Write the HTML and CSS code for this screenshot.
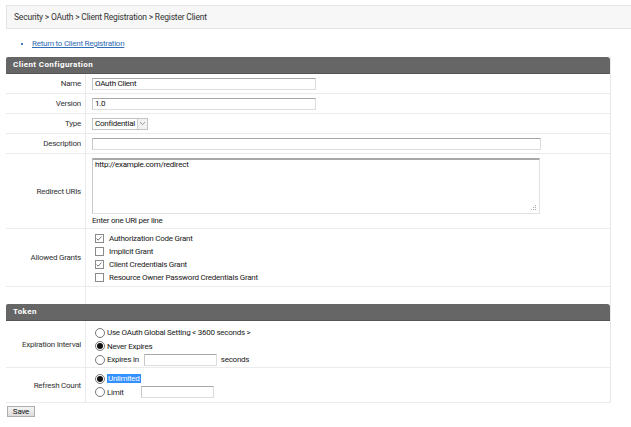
FILE: index.html
```html
<!DOCTYPE html>
<html>
<head>
<meta charset="utf-8">
<link rel="stylesheet" href="styles.css">
</head>
<body>
<div class="crumbs">Security &gt; OAuth &gt; Client Registration &gt; Register Client</div>
<ul class="links"><li><a href="#">Return to Client Registration</a></li></ul>

<div class="panel">
  <div class="panel-head">Client Configuration</div>
  <div class="row"><div class="lbl">Name</div><div class="val"><span class="inp w-mid">OAuth Client</span></div></div>
  <div class="row"><div class="lbl">Version</div><div class="val"><span class="inp w-mid">1.0</span></div></div>
  <div class="row"><div class="lbl">Type</div><div class="val"><span class="sel">Confidential<span class="sel-btn"><svg width="7" height="5" viewBox="0 0 7 5"><path d="M1 1.2 L3.5 3.6 L6 1.2" fill="none" stroke="#888" stroke-width="0.9"/></svg></span></span></div></div>
  <div class="row"><div class="lbl">Description</div><div class="val"><span class="inp w-wide"></span></div></div>
  <div class="row tall"><div class="lbl">Redirect URIs</div><div class="val col"><div class="ta">http://example.com/redirect<svg class="grip" width="6" height="6" viewBox="0 0 6 6"><rect x="4" y="0" width="1" height="1" fill="#aaa"/><rect x="2" y="2" width="1" height="1" fill="#aaa"/><rect x="4" y="2" width="1" height="1" fill="#aaa"/><rect x="0" y="4" width="1" height="1" fill="#aaa"/><rect x="2" y="4" width="1" height="1" fill="#aaa"/><rect x="4" y="4" width="1" height="1" fill="#aaa"/></svg></div><div class="hint">Enter one URI per line</div></div></div>
  <div class="row grants"><div class="lbl">Allowed Grants</div><div class="val col">
    <label class="opt"><span class="cb"><svg width="9" height="9" viewBox="0 0 9 9"><path d="M1.8 4.6 L3.6 6.4 L7.3 2.2" fill="none" stroke="#555" stroke-width="0.9"/></svg></span>Authorization Code Grant</label>
    <label class="opt"><span class="cb"></span>Implicit Grant</label>
    <label class="opt"><span class="cb"><svg width="9" height="9" viewBox="0 0 9 9"><path d="M1.8 4.6 L3.6 6.4 L7.3 2.2" fill="none" stroke="#555" stroke-width="0.9"/></svg></span>Client Credentials Grant</label>
    <label class="opt"><span class="cb"></span>Resource Owner Password Credentials Grant</label>
  </div></div>
  <div class="row empty"><div class="lbl"></div><div class="val"></div></div>
</div>

<div class="panel token">
  <div class="panel-head">Token</div>
  <div class="row exp"><div class="lbl">Expiration Interval</div><div class="val col">
    <label class="ropt"><span class="rd"></span>Use OAuth Global Setting &lt; 3600 seconds &gt;</label>
    <label class="ropt"><span class="rd on"></span>Never Expires</label>
    <label class="ropt"><span class="rd"></span>Expires in<span class="inp w-sm exp-in"></span>seconds</label>
  </div></div>
  <div class="row ref"><div class="lbl">Refresh Count</div><div class="val col">
    <label class="ropt"><span class="rd on"></span><span class="hl">Unlimited</span></label>
    <label class="ropt"><span class="rd"></span>Limit<span class="inp w-sm lim-in"></span></label>
  </div></div>
</div>
<button class="save">Save</button>
</body>
</html>
```
FILE: styles.css
```css
* { box-sizing: border-box; }
body {
  margin: 0;
  background: #fff;
  font-family: Roboto, "Liberation Sans", Arial, sans-serif;
  font-size: 8px;
  letter-spacing: -0.25px;
  color: #222;
}
.crumbs {
  margin: 5px 0 0 6px;
  height: 24px;
  background: #f7f7f7;
  border: 1px solid #e4e4e4;
  border-right: none;
  padding-left: 7px;
  line-height: 22px;
  font-size: 8.5px;
  letter-spacing: -0.2px;
  color: #333;
}
.links {
  margin: 8px 0 0 0;
  padding: 0 0 0 32px;
  height: 20px;
  line-height: 13px;
  list-style: square;
  color: #3b7dc4;
}
.links li::marker { font-size: 6px; }
.links a { color: #2f6db5; font-size: 8px; }
.panel {
  width: 605px;
  margin-left: 6px;
  border-right: 1px solid #e8e8e8;
}
.panel-head {
  height: 17px;
  background: #666;
  color: #fff;
  font-weight: bold;
  letter-spacing: 0.4px;
  padding-left: 7px;
  line-height: 16px;
  border-radius: 2px 3px 0 0;
  border-bottom: 1px solid #555;
  font-size: 8px;
}
.row {
  display: grid;
  grid-template-columns: 80px 1fr;
  height: 20px;
  border-bottom: 1px solid #ebebeb;
}
.lbl {
  border-right: 1px solid #ebebeb;
  text-align: right;
  padding-right: 4px;
  display: flex;
  align-items: center;
  justify-content: flex-end;
  color: #333;
}
.val {
  display: flex;
  align-items: center;
  padding-left: 6px;
}
.val.col {
  flex-direction: column;
  align-items: flex-start;
  justify-content: flex-start;
}
.inp {
  display: inline-block;
  height: 12px;
  border: 1px solid #ddd;
  border-top-color: #a8a8a8;
  border-left-color: #c8c8c8;
  background: #fff;
  padding-left: 2px;
  line-height: 10px;
  font-size: 8px;
  color: #111;
}
.w-mid { width: 224px; }
.w-wide { width: 449px; }
.sel {
  display: inline-flex;
  align-items: center;
  height: 12px;
  border: 1px solid #c4c4c4;
  padding-left: 2px;
  font-size: 8px;
  color: #111;
  background: #fff;
}
.sel-btn {
  display: inline-flex;
  align-items: center;
  justify-content: center;
  width: 10px;
  height: 10px;
  margin: 0 0 0 2px;
  border-left: 1px solid #ccc;
  background: #f2f2f2;
}
.row.tall { height: 75px; }
.ta {
  position: relative;
  margin-top: 4px;
  width: 448px;
  height: 56px;
  border: 1px solid #e2e2e2;
  border-top: 2px solid #a8a8a8;
  border-left-color: #c8c8c8;
  padding: 0 2px;
  font-size: 8px;
  line-height: 10px;
  color: #111;
}
.grip { position: absolute; right: 2px; bottom: 2px; }
.hint { margin-top: 2px; font-size: 8px; color: #222; }
.row.grants { height: 58px; }
.grants .val { padding-top: 3px; padding-left: 9px; }
.opt {
  display: flex;
  align-items: center;
  height: 13px;
  color: #222;
}
.cb {
  display: inline-flex;
  width: 9px;
  height: 9px;
  border: 1px solid #8a8a8a;
  margin-right: 5px;
  background: #fff;
}
.cb svg { margin: -1px 0 0 -1px; }
.row.empty { height: 17px; border-bottom: none; }
.panel.token { margin-top: 0; border-bottom: 1px solid #ebebeb; }
.row.exp { height: 47px; }
.exp .val, .ref .val { padding-left: 9px; padding-top: 5px; }
.ropt {
  display: flex;
  align-items: center;
  height: 13.5px;
  color: #222;
  font-size: 8px;
}
.rd {
  width: 10px;
  height: 10px;
  border-radius: 50%;
  border: 1px solid #777;
  background: #fff;
  margin-right: 2px;
  display: inline-flex;
  align-items: center;
  justify-content: center;
}
.rd.on::after {
  content: "";
  width: 6px;
  height: 6px;
  border-radius: 50%;
  background: #111;
}
.w-sm { width: 73px; }
.exp-in { margin: 0 4px 0 5px; }
.lim-in { margin-left: 17px; }
.row.ref { height: 34px; border-bottom: none; }
.ref .val { padding-top: 4px; }
.hl { background: #3390ff; color: #fff; padding: 0 1px; }
.save {
  display: block;
  margin: 3px 0 0 7px;
  width: 28px;
  height: 11px;
  padding: 0;
  font-family: Roboto, "Liberation Sans", Arial, sans-serif;
  font-size: 8px;
  letter-spacing: -0.2px;
  line-height: 9px;
  color: #111;
  background: linear-gradient(#f4f4f4, #dcdcdc);
  border: 1px solid #adadad;
  border-radius: 0;
}
```
